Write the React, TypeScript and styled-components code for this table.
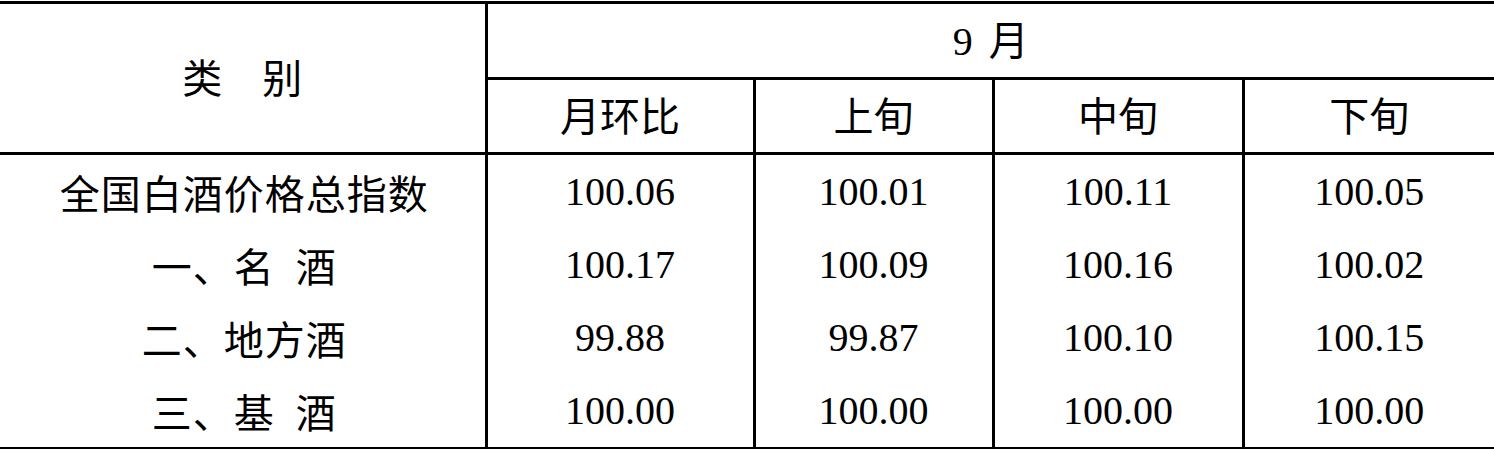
import styled, { createGlobalStyle } from "styled-components"

const GlobalStyle = createGlobalStyle`
  html, body {
    margin: 0;
    padding: 0;
    background: #ffffff;
  }
`

const Table = styled.table`
  width: 1494px;
  table-layout: fixed;
  border-collapse: collapse;
  margin-top: 1px;
  border-top: 3px solid #000;
  border-bottom: 3px solid #000;
  font-family: "Liberation Serif", "Noto Sans CJK SC", serif;
  font-size: 40px;
  color: #000;
  word-spacing: 6px;
`

const Col = styled.col<{ $w: number }>`
  width: ${(p) => p.$w}px;
`

const HeadCell = styled.th<{ $h?: number }>`
  font-weight: 400;
  text-align: center;
  vertical-align: middle;
  padding: 0 0 5px;
  height: ${(p) => p.$h ?? 67}px;
  border: 3px solid #000;
  &:first-child {
    border-left: none;
  }
  &:last-child {
    border-right: none;
  }
`

const Cell = styled.td`
  text-align: center;
  vertical-align: middle;
  padding: 0;
  height: 73px;
  border-left: 3px solid #000;
  border-right: 3px solid #000;
  &:first-child {
    border-left: none;
  }
  &:last-child {
    border-right: none;
  }
`

const NameCell = styled(Cell)`
  letter-spacing: 1px;
  padding-left: 4px;
`

const widths = [486, 268, 239, 250, 251]

const rows = [
  { name: "全国白酒价格总指数", values: ["100.06", "100.01", "100.11", "100.05"] },
  { name: "一、名\u2002酒", values: ["100.17", "100.09", "100.16", "100.02"] },
  { name: "二、地方酒", values: ["99.88", "99.87", "100.10", "100.15"] },
  { name: "三、基\u2002酒", values: ["100.00", "100.00", "100.00", "100.00"] },
]

const App = () => {
  return (
    <>
      <GlobalStyle />
      <Table>
        <colgroup>
          {widths.map((w, i) => (
            <Col key={i} $w={w} />
          ))}
        </colgroup>
        <thead>
          <tr>
            <HeadCell rowSpan={2}>类　别</HeadCell>
            <HeadCell colSpan={4} $h={68}>9 月</HeadCell>
          </tr>
          <tr>
            <HeadCell>月环比</HeadCell>
            <HeadCell>上旬</HeadCell>
            <HeadCell>中旬</HeadCell>
            <HeadCell>下旬</HeadCell>
          </tr>
        </thead>
        <tbody>
          {rows.map((row) => (
            <tr key={row.name}>
              <NameCell>{row.name}</NameCell>
              {row.values.map((v, i) => (
                <Cell key={i}>{v}</Cell>
              ))}
            </tr>
          ))}
        </tbody>
      </Table>
    </>
  )
}

export default App
